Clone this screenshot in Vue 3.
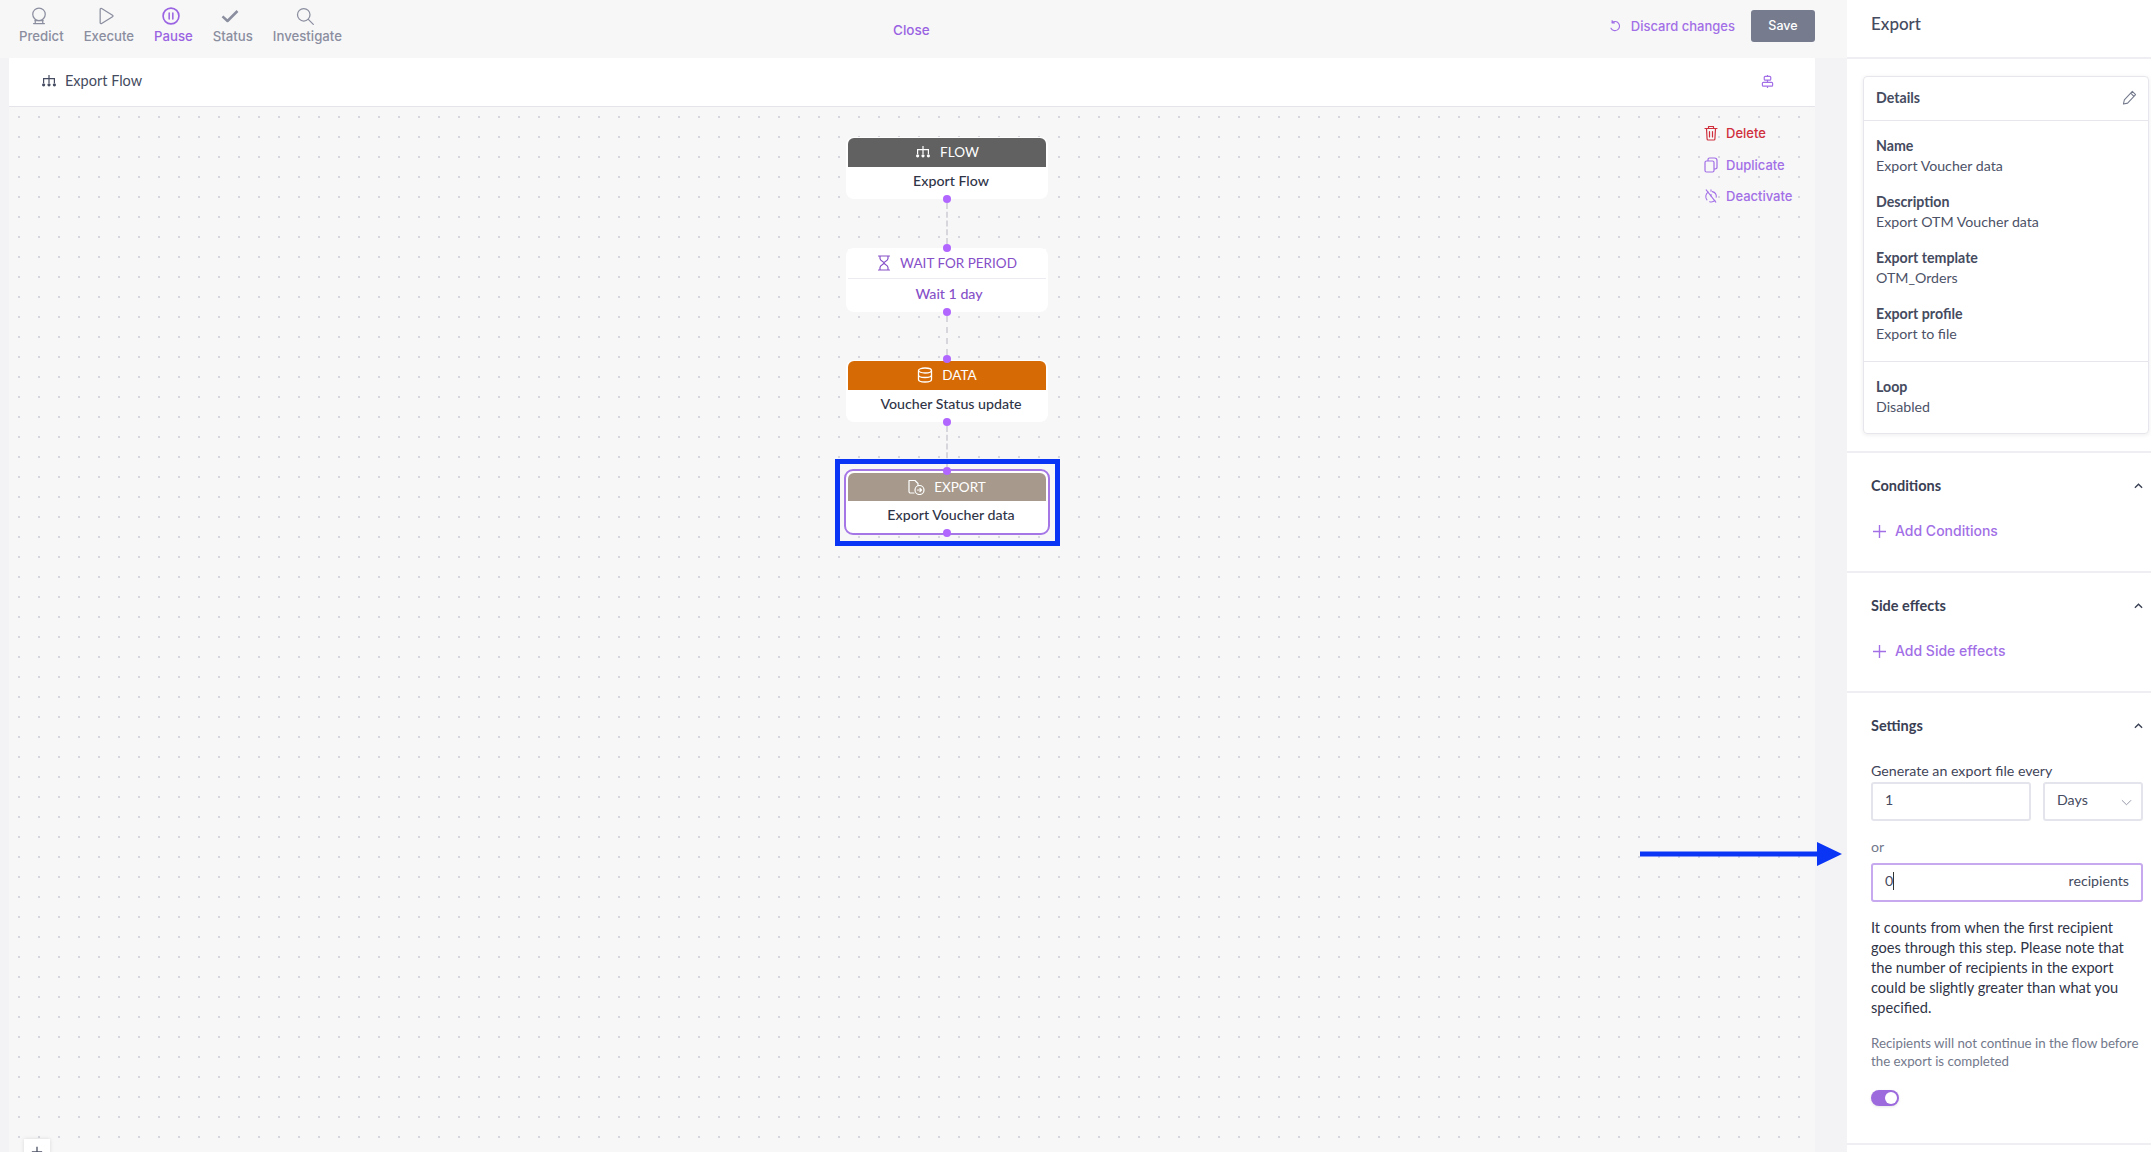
<script setup>
const tools = [
  { label: 'Predict', icon: 'predict' },
  { label: 'Execute', icon: 'execute' },
  { label: 'Pause', icon: 'pause', active: true },
  { label: 'Status', icon: 'status' },
  { label: 'Investigate', icon: 'search' }
]
const details = [
  ['Name', 'Export Voucher data'],
  ['Description', 'Export OTM Voucher data'],
  ['Export template', 'OTM_Orders'],
  ['Export profile', 'Export to file']
]
const dots = [199, 248, 312, 359, 422, 471, 533]
const links = [[203, 244], [316, 355], [426, 467]]
</script>

<template>
  <div class="app">
    <main class="main">
      <header class="topbar">
        <nav class="tools">
          <button v-for="t in tools" :key="t.label" class="tool" :class="{ active: t.active }">
            <svg class="tool-icon" viewBox="0 0 24 24" fill="none" stroke="currentColor" stroke-width="1.5" stroke-linecap="round" stroke-linejoin="round">
              <template v-if="t.icon === 'predict'">
                <circle cx="12" cy="10" r="7.500" />
                <path d="M7 17.500h10M5.500 21h13M7.500 18v3M16.500 18v3" />
              </template>
              <path v-else-if="t.icon === 'execute'" d="M5 4c0-1 1-1.500 1.800-1l13 8c.8.500.8 1.500 0 2l-13 8c-.8.500-1.800 0-1.800-1z" />
              <template v-else-if="t.icon === 'pause'">
                <circle cx="12" cy="12" r="9.500" stroke-width="2" />
                <path d="M9.800 8.500v7M14.200 8.500v7" stroke-width="1.800" />
              </template>
              <path v-else-if="t.icon === 'status'" d="M3 12.500l6 5.500L21 6" stroke-width="3" stroke-linecap="butt" />
              <template v-else>
                <circle cx="10.500" cy="10.500" r="7.500" />
                <path d="M16 16l6 6" />
              </template>
            </svg>
            <span>{{ t.label }}</span>
          </button>
        </nav>
        <a class="close">Close</a>
        <div class="top-actions">
          <a class="discard">
            <svg viewBox="0 0 16 16" fill="none" stroke="currentColor" stroke-width="1.300" stroke-linecap="round" stroke-linejoin="round">
              <path d="M4.500 4.200A5.200 5.200 0 1 1 3.400 10.500M4.700 1.800v2.700H7.300" />
            </svg>
            Discard changes
          </a>
          <button class="save">Save</button>
        </div>
      </header>

      <div class="workspace">
        <div class="subhead">
          <div class="subhead-title">
            <svg class="flow-icon dark" viewBox="0 0 16 14" fill="currentColor">
              <path d="M7.400 1h1.200v3h5.400v5h-1.200V5.200H8.600V9H7.400V5.200H3.200V9H2V4h5.400z" />
              <circle cx="2.600" cy="10.800" r="1.600" /><circle cx="8" cy="10.800" r="1.600" /><circle cx="13.400" cy="10.800" r="1.600" />
            </svg>
            Export Flow
          </div>
          <svg class="align-icon" viewBox="0 0 14 16" fill="none" stroke="currentColor" stroke-width="1.300">
            <path d="M7 1v14" /><rect x="3.500" y="2.500" width="7" height="4" rx="1" fill="#fff" /><rect x="1.500" y="9" width="11" height="4" rx="1" fill="#fff" />
          </svg>
        </div>

        <div class="canvas">
          <div v-for="l in links" :key="l[0]" class="link" :style="{ top: l[0] - 107 + 'px', height: l[1] - l[0] + 'px' }"></div>

          <section class="node n-flow">
            <div class="node-head head-flow">
              <svg class="flow-icon" viewBox="0 0 16 14" fill="currentColor">
                <path d="M7.400 1h1.200v3h5.400v5h-1.200V5.200H8.600V9H7.400V5.200H3.200V9H2V4h5.400z" />
                <circle cx="2.600" cy="10.800" r="1.600" /><circle cx="8" cy="10.800" r="1.600" /><circle cx="13.400" cy="10.800" r="1.600" />
              </svg>
              FLOW
            </div>
            <div class="node-body">Export Flow</div>
          </section>

          <section class="node n-wait">
            <div class="node-head head-wait">
              <svg class="hour-icon" viewBox="0 0 14 16" fill="none" stroke="currentColor" stroke-width="1.200" stroke-linecap="round" stroke-linejoin="round">
                <path d="M1.500 1h11M1.500 15h11M3 1v2.500C3 6 7 6.800 7 8s-4 2-4 4.500V15M11 1v2.500C11 6 7 6.800 7 8s4 2 4 4.500V15" />
              </svg>
              WAIT FOR PERIOD
            </div>
            <div class="node-body body-wait">Wait 1 day</div>
          </section>

          <section class="node n-data">
            <div class="node-head head-data">
              <svg class="db-icon" viewBox="0 0 16 16" fill="none" stroke="currentColor" stroke-width="1.300">
                <ellipse cx="8" cy="3.500" rx="6.500" ry="2.500" />
                <path d="M1.500 3.500v9c0 1.400 2.900 2.500 6.500 2.500s6.500-1.100 6.500-2.500v-9M1.500 8c0 1.400 2.900 2.500 6.500 2.500S14.500 9.400 14.500 8" />
              </svg>
              DATA
            </div>
            <div class="node-body">Voucher Status update</div>
          </section>

          <section class="node n-export">
            <div class="node-head head-export">
              <svg class="file-icon" viewBox="0 0 17 16" fill="none" stroke="currentColor" stroke-width="1.200" stroke-linecap="round" stroke-linejoin="round">
                <path d="M6 14H2.500A1.500 1.500 0 0 1 1 12.500v-11h6l3 3v2" />
                <circle cx="11.500" cy="11" r="4.500" />
                <path d="M9.500 11h4M12 9.500l1.500 1.500-1.500 1.500" />
              </svg>
              EXPORT
            </div>
            <div class="node-body">Export Voucher data</div>
          </section>

          <i v-for="d in dots" :key="d" class="dot" :style="{ top: d - 107 - 4 + 'px' }"></i>

          <ul class="actions">
            <li class="delete">
              <svg viewBox="0 0 14 16" fill="none" stroke="currentColor" stroke-width="1.200" stroke-linecap="round" stroke-linejoin="round">
                <path d="M1 3.500h12M4.500 3V1.500h5V3M2.500 3.500l.6 10.500c0 .6.500 1 1 1h5.800c.5 0 1-.4 1-1l.6-10.500M5.500 6.500v5.500M8.500 6.500v5.500" />
              </svg>
              Delete
            </li>
            <li>
              <svg viewBox="0 0 14 16" fill="none" stroke="currentColor" stroke-width="1.200" stroke-linejoin="round">
                <rect x="1" y="4" width="9" height="11" rx="1.500" />
                <path d="M4 4V2.500C4 1.700 4.700 1 5.500 1h5C12 1 13 2 13 3.500v7c0 .8-.6 1.500-3 1.500" />
              </svg>
              Duplicate
            </li>
            <li>
              <svg viewBox="0 0 16 16" fill="none" stroke="currentColor" stroke-width="1.200" stroke-linecap="round">
                <path d="M2.500 1L13.500 15M5 3.500A6 6 0 0 0 3.400 12.500M6.500 14.500a6 6 0 0 0 6-1.500M14 9.500A6 6 0 0 0 9.500 3" />
                <path d="M8 2.500V.8M8 6v2" />
              </svg>
              Deactivate
            </li>
          </ul>

          <button class="zoom-in">
            <svg viewBox="0 0 14 14" fill="none" stroke="#4a4f63" stroke-width="1.500"><path d="M7 1v12M1 7h12" /></svg>
          </button>
        </div>
      </div>
    </main>

    <aside class="panel">
      <h1 class="panel-title">Export</h1>

      <section class="block first">
        <div class="card">
          <div class="card-head">
            <span>Details</span>
            <svg viewBox="0 0 16 16" fill="none" stroke="#73798c" stroke-width="1.100" stroke-linejoin="round">
              <path d="M11 1.500l3.500 3.500-8.500 9-4.500 1 1-4.500zM9.500 3.500L13 7" />
            </svg>
          </div>
          <div class="card-body">
            <dl v-for="d in details" :key="d[0]" class="item">
              <dt>{{ d[0] }}</dt>
              <dd>{{ d[1] }}</dd>
            </dl>
          </div>
          <div class="card-foot">
            <dl class="item">
              <dt>Loop</dt>
              <dd>Disabled</dd>
            </dl>
          </div>
        </div>
      </section>

      <section class="block">
        <div class="block-head">
          <h2>Conditions</h2>
          <svg class="chev" viewBox="0 0 10 6" fill="none" stroke="#3a4054" stroke-width="1.500"><path d="M1 5l4-4 4 4" /></svg>
        </div>
        <a class="add">
          <svg viewBox="0 0 14 14" fill="none" stroke="currentColor" stroke-width="1.500"><path d="M7 0v14M0 7h14" /></svg>
          Add Conditions
        </a>
      </section>

      <section class="block">
        <div class="block-head">
          <h2>Side effects</h2>
          <svg class="chev" viewBox="0 0 10 6" fill="none" stroke="#3a4054" stroke-width="1.500"><path d="M1 5l4-4 4 4" /></svg>
        </div>
        <a class="add">
          <svg viewBox="0 0 14 14" fill="none" stroke="currentColor" stroke-width="1.500"><path d="M7 0v14M0 7h14" /></svg>
          Add Side effects
        </a>
      </section>

      <section class="block settings">
        <div class="block-head">
          <h2>Settings</h2>
          <svg class="chev" viewBox="0 0 10 6" fill="none" stroke="#3a4054" stroke-width="1.500"><path d="M1 5l4-4 4 4" /></svg>
        </div>
        <div class="label first-label">Generate an export file every</div>
        <div class="row">
          <div class="field grow">1</div>
          <div class="field select">
            Days
            <svg viewBox="0 0 12 7" fill="none" stroke="#8a8fa0" stroke-width="1"><path d="M1 1l5 5 5-5" /></svg>
          </div>
        </div>
        <div class="label or">or</div>
        <div class="field focus">
          <span class="value">0<i class="caret"></i></span>
          <span>recipients</span>
        </div>
        <p class="para">It counts from when the first recipient<br />goes through this step. Please note that<br />the number of recipients in the export<br />could be slightly greater than what you<br />specified.</p>
        <p class="help">Recipients will not continue in the flow before<br />the export is completed</p>
        <div class="toggle"><i></i></div>
      </section>
    </aside>

    <div class="mark-box"></div>
    <svg class="mark-arrow" viewBox="0 0 202 24"><path d="M0 9.500h177V0l25 12-25 12v-9.500H0z" fill="#0a35f5" /></svg>
  </div>
</template>

<style>
html, body { margin: 0; padding: 0; overflow: hidden; }
</style>

<style scoped>
.app {
  position: relative;
  display: flex;
  width: 2151px;
  height: 1152px;
  overflow: hidden;
  background: #f3f3f6;
  font-family: "Lato", "Noto Sans", sans-serif;
  font-size: 14.200px;
  line-height: 20px;
  color: #3f4559;
}
button { font: inherit; border: 0; background: none; padding: 0; }
dl, dd, h1, h2, p, ul { margin: 0; padding: 0; }
svg { display: block; flex: none; }

.main { width: 1847px; display: flex; flex-direction: column; flex: none; }
.topbar {
  height: 58px;
  background: #f7f7f8;
  display: flex;
  align-items: flex-start;
  padding: 0 32px 0 19px;
  position: relative;
  flex: none;
}
.tools { display: flex; gap: 20px; padding-top: 6px; font-family: Inter, sans-serif; }
.tool {
  display: flex;
  flex-direction: column;
  align-items: center;
  font-family: Inter, sans-serif;
  font-size: 13.200px;
  font-weight: 500;
  line-height: 16px;
  color: #8b8e9f;
  gap: 2px;
}
.tool.active { color: #9a63e2; }
.tool-icon { width: 20px; height: 20px; margin-right: 5px; }
.close {
  position: absolute;
  left: 893px;
  top: 20px;
  font-family: Inter, sans-serif;
  font-weight: 500;
  font-size: 13.500px;
  color: #9a63e2;
}
.top-actions { margin-left: auto; display: flex; align-items: center; gap: 16px; padding-top: 10px; }
.discard {
  display: flex;
  align-items: center;
  gap: 9px;
  color: #a26fe6;
  font-family: Inter, sans-serif;
  font-weight: 500;
  font-size: 13px;
}
.discard svg { width: 14px; height: 14px; }
.save {
  width: 64px;
  height: 32px;
  background: #767b8e;
  color: #fff;
  border-radius: 3px;
  font-family: Inter, sans-serif;
  font-weight: 500;
  font-size: 12.500px;
}

.workspace { flex: 1; margin: 0 32px 0 9px; display: flex; flex-direction: column; min-height: 0; }
.subhead {
  height: 48px;
  flex: none;
  background: #fff;
  border-bottom: 1px solid #e4e4ea;
  display: flex;
  align-items: center;
  justify-content: space-between;
  padding: 0 41px 0 32px;
}
.subhead-title { display: flex; align-items: center; gap: 8px; font-size: 14.500px; color: #454b60; margin-top: -2px; }
.flow-icon { width: 16px; height: 14px; }
.flow-icon.dark { color: #454b60; }
.align-icon { width: 13px; height: 15px; color: #a26fe6; margin-top: -2px; }

.canvas {
  flex: 1;
  position: relative;
  overflow: hidden;
  background-color: #f7f7f8;
  background-image: radial-gradient(circle at 10px 10px, #d6d6de 1.100px, transparent 1.300px);
  background-size: 20px 20px;
}
.node {
  position: absolute;
  left: 837px;
  width: 202px;
  background: #fff;
  border-radius: 8px;
  box-sizing: border-box;
  padding: 1px 2px 0;
  text-align: center;
}
.n-flow { top: 30px; height: 62px; }
.n-wait { top: 141px; height: 64px; }
.n-data { top: 253px; height: 62px; }
.n-export { top: 362px; left: 835px; width: 206px; height: 66px; border: 2px solid #a577e6; padding: 2px 2px 0; border-radius: 9px; }
.node-head {
  height: 29px;
  box-sizing: border-box;
  padding-bottom: 1px;
  border-radius: 6px 6px 0 0;
  display: flex;
  align-items: center;
  justify-content: center;
  gap: 9px;
  color: #fff;
  font-size: 13.500px;
}
.head-flow { background: #616161; }
.head-data { background: #d66b06; }
.head-export { background: #a79a8c; height: 28px; }
.head-wait { color: #8650c8; background: #fff; height: 30px; border-bottom: 1px solid #ececf0; border-radius: 0; }
.node-body { padding: 4px 0 0 8px; font-size: 14.200px; font-weight: 500; color: #2f3447; line-height: 20px; }
.body-wait { color: #8650c8; padding-top: 5px; padding-left: 4px; }
.hour-icon { width: 14px; height: 16px; }
.db-icon { width: 16px; height: 16px; }
.file-icon { width: 17px; height: 16px; }
.link {
  position: absolute;
  left: 937px;
  width: 0;
  border-left: 2px dashed #d6d6dc;
}
.dot {
  position: absolute;
  left: 934px;
  width: 8px;
  height: 8px;
  border-radius: 50%;
  background: #b066ff;
}
.actions {
  position: absolute;
  left: 1695px;
  top: 16px;
  list-style: none;
  font-family: Inter, sans-serif;
  font-size: 13px;
  font-weight: 500;
  color: #a26fe6;
}
.actions li { display: flex; align-items: center; gap: 8px; height: 20px; margin-bottom: 11.500px; }
.actions svg { width: 14px; height: 16px; }
.actions .delete { color: #d0303c; }
.zoom-in {
  position: absolute;
  left: 15px;
  top: 1032px;
  width: 26px;
  height: 26px;
  background: #fff;
  box-shadow: 0 0 4px rgba(0, 0, 0, .12);
  display: flex;
  justify-content: center;
  padding-top: 7px;
  box-sizing: border-box;
}
.zoom-in svg { width: 12px; height: 12px; }

.panel { flex: 1; background: #fff; min-width: 0; overflow: hidden; }
.panel-title {
  height: 59px;
  box-sizing: border-box;
  padding: 14px 24px 0;
  font-size: 17px;
  font-weight: 500;
  color: #454b60;
  border-bottom: 2px solid #eeeef3;
}
.block { border-bottom: 2px solid #eeeef3; padding: 23px 8px 30px 24px; }
.block.first { padding: 17px 2px 17px 16px; }
.card {
  border: 1px solid #e6e6ec;
  border-radius: 4px;
  box-shadow: 0 1px 4px rgba(30, 30, 60, .08);
}
.card-head {
  height: 44px;
  box-sizing: border-box;
  border-bottom: 1px solid #e6e6ec;
  display: flex;
  align-items: center;
  justify-content: space-between;
  padding: 0 11px 2px 12px;
  font-weight: 700;
  color: #454b60;
}
.card-head svg { width: 15px; height: 15px; }
.card-body { padding: 15px 12px 17px; border-bottom: 1px solid #e6e6ec; }
.item + .item { margin-top: 16px; }
.item dt { font-weight: 700; color: #454b60; }
.item dd { color: #4c5267; }
.card-foot { padding: 15px 12px 16px; }
.block-head { display: flex; justify-content: space-between; align-items: center; }
.block-head h2 { font-size: 14.500px; font-weight: 700; color: #3a4054; }
.chev { width: 9px; height: 6px; }
.add {
  display: flex;
  align-items: center;
  gap: 9px;
  margin-top: 25px;
  padding-left: 2px;
  color: #a26fe6;
  font-family: Inter, sans-serif;
  font-size: 14px;
  font-weight: 500;
}
.add svg { width: 13px; height: 13px; }
.settings { padding-bottom: 37px; }
.label { color: #3f4559; }
.first-label { margin-top: 25px; margin-bottom: 1px; }
.row { display: flex; gap: 12px; }
.field {
  height: 39px;
  box-sizing: border-box;
  border: 2px solid #e4e4ec;
  border-radius: 3px;
  display: flex;
  align-items: center;
  padding: 0 12px 3px;
  color: #454b60;
}
.grow { flex: 1; }
.select { width: 100px; justify-content: space-between; padding-right: 9px; }
.select svg { width: 11px; height: 7px; margin-top: 5px; }
.or { margin: 16px 0 6px; color: #73798c; }
.focus { border-color: #c6a9ee; justify-content: space-between; }
.value { display: inline-flex; align-items: center; }
.caret { width: 1px; height: 18px; background: #333; display: block; }
.para { margin-top: 16px; color: #2f3447; font-size: 14.600px; white-space: nowrap; }
.help { margin-top: 16px; color: #73798c; font-size: 13.300px; line-height: 18px; white-space: nowrap; }
.toggle {
  width: 28px;
  height: 16px;
  border-radius: 8px;
  background: #9d6ade;
  margin-top: 20px;
  position: relative;
  box-shadow: 0 1px 3px rgba(0, 0, 0, .1);
}
.toggle i {
  position: absolute;
  right: 2px;
  top: 2px;
  width: 12px;
  height: 12px;
  border-radius: 50%;
  background: #fff;
}

.mark-box {
  position: absolute;
  left: 835px;
  top: 459px;
  width: 225px;
  height: 87px;
  box-sizing: border-box;
  border: 5px solid #0a35f5;
}
.mark-arrow {
  position: absolute;
  left: 1640px;
  top: 842px;
  width: 202px;
  height: 24px;
}
</style>
